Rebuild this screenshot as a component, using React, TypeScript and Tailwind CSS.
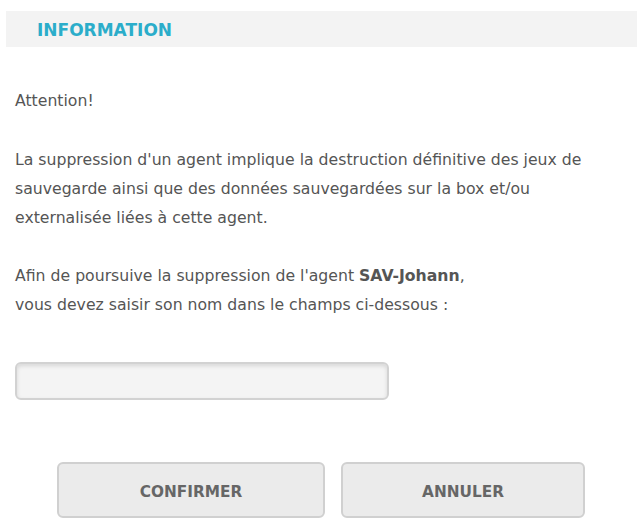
export default function App() {
  return (
    <div className="w-[642px] h-[526px] bg-white pt-[11px] font-['DejaVu_Sans',sans-serif] text-[#555555]">
      <div className="mx-[6px] mr-[5px] h-[36px] bg-[#f3f3f3] flex items-center pl-[31px] pt-[3px]">
        <span className="text-[17px] font-bold text-[#2badca]">INFORMATION</span>
      </div>

      <div className="px-[15px] pt-[39px] text-[15.7px] leading-[29px]">
        <p>Attention!</p>
        <p className="mt-[30px]">
          La suppression d'un agent implique la destruction définitive des jeux de
          <br />
          sauvegarde ainsi que des données sauvegardées sur la box et/ou
          <br />
          externalisée liées à cette agent.
        </p>
        <p className="mt-[29px]">
          Afin de poursuive la suppression de l'agent <b>SAV-Johann</b>,
          <br />
          vous devez saisir son nom dans le champs ci-dessous :
        </p>

        <input
          type="text"
          className="mt-[43px] block w-[374px] h-[38px] rounded-[6px] border-2 border-[#d2d2d2] bg-[#f4f4f4] shadow-[inset_0_2px_4px_rgba(0,0,0,0.12)] outline-none"
        />
      </div>

      <div className="flex gap-[16px] pl-[57px] mt-[62px]">
        <button className="w-[268px] h-[56px] rounded-[6px] border-2 border-[#d0d0d0] bg-[#ebebeb] pt-[4px] text-[15.3px] font-bold text-[#666666]">
          CONFIRMER
        </button>
        <button className="w-[244px] h-[56px] rounded-[6px] border-2 border-[#d0d0d0] bg-[#ebebeb] pt-[4px] text-[15.3px] font-bold text-[#666666]">
          ANNULER
        </button>
      </div>
    </div>
  );
}
